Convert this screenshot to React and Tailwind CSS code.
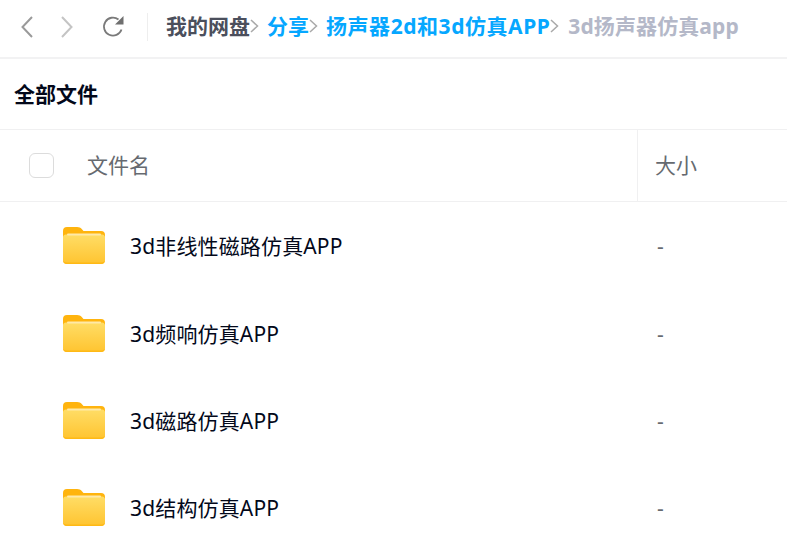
const font = { fontFamily: '"Noto Sans", "Noto Sans CJK SC", sans-serif' };

function Chevron({ dir = "right", className }) {
  return (
    <svg viewBox="0 0 12 24" className={className} fill="none" stroke="currentColor" strokeWidth="2">
      <path d={dir === "left" ? "M11 2 1.5 12 11 22" : "M1 2l9.5 10L1 22"} />
    </svg>
  );
}

function Sep() {
  return (
    <svg viewBox="0 0 9 14" className="w-[9px] h-[14px] text-[#a9a9a9] shrink-0" fill="none" stroke="currentColor" strokeWidth="1.5">
      <path d="M1 1l6.5 6L1 13" />
    </svg>
  );
}

function Folder({ id }) {
  return (
    <svg viewBox="0 0 42 37" className="w-[42px] h-[37px] shrink-0">
      <defs>
        <linearGradient id={id} x1="0" y1="0" x2="0" y2="1">
          <stop offset="0" stopColor="#ffdd66" />
          <stop offset="1" stopColor="#ffc430" />
        </linearGradient>
      </defs>
      <path d="M0 4a4 4 0 0 1 4-4h10c2.500 0 3.500.8 4.500 1.800L20.500 4H38a4 4 0 0 1 4 4v12H0z" fill="#ffb40e" />
      <path d="M0 11a3 3 0 0 1 3-3.500h36A3 3 0 0 1 42 11v22a4 4 0 0 1-4 4H4a4 4 0 0 1-4-4z" fill={`url(#${id})`} />
      <path d="M0 32.500c0 2 1.500 3 4 3h34c2.500 0 4-1 4-3V33a4 4 0 0 1-4 4H4a4 4 0 0 1-4-4z" fill="#ffb915" />
      <rect x="4" y="6.500" width="34" height="2" rx="1" fill="#ffe9a8" />
    </svg>
  );
}

const rows = [
  { name: "3d非线性磁路仿真APP", id: "f1", cls: "h-[87px] flex items-center" },
  { name: "3d频响仿真APP", id: "f2", cls: "h-[87px] mt-px flex items-center" },
  { name: "3d磁路仿真APP", id: "f3", cls: "h-[87px] flex items-center" },
  { name: "3d结构仿真APP", id: "f4", cls: "h-[87px] flex items-center" },
];

export default function App() {
  return (
    <div style={font} className="w-[787px] h-[560px] overflow-hidden bg-white">
      <div className="h-[59px] flex items-center border-b-2 border-[#f2f2f3] pb-[4px]">
        <div className="w-[147px] h-[28px] flex items-center pl-[21px]">
          <Chevron dir="left" className="w-[12px] h-[24px] text-[#9a9a9a]" />
          <Chevron className="w-[12px] h-[24px] text-[#c4c4c4] ml-[28px]" />
          <svg viewBox="0 0 24 24" className="w-[24px] h-[24px] ml-[29px]" fill="none">
            <path d="M19.500 14.500A9 9 0 1 1 16.500 4.500" stroke="#7a7a7a" strokeWidth="1.800" />
            <path d="M21.500 1v8.500H13z" fill="#6f6f6f" />
          </svg>
        </div>
        <div className="w-px h-[28px] bg-[#eeeeee]" />
        <div className="flex items-center text-[21px] leading-[26px] mb-[2px] font-bold ml-[18px] whitespace-nowrap">
          <span className="text-[#4b4f5c]">我的网盘</span>
          <Sep />
          <span className="text-[#06a7ff] ml-[8px]">分享</span>
          <Sep />
          <span className="text-[#06a7ff] ml-[8px] tracking-[0.55px]">扬声器2d和3d仿真APP</span>
          <Sep />
          <span className="text-[#b4b8c8] ml-[9px] tracking-[0.1px]">3d扬声器仿真app</span>
        </div>
      </div>
      <div className="h-[71px] flex items-center pl-[14px] text-[21px] leading-[28px] font-bold text-[#03081a] border-b border-[#f0f0f1]">
        全部文件
      </div>
      <div className="h-[72px] flex items-center border-b border-[#f0f0f1]">
        <div className="w-[638px] h-full flex items-center pl-[29px] border-r border-[#f0f0f1]">
          <div className="w-[25px] h-[25px] rounded-[6px] border border-[#dcdcdc]" />
          <span className="ml-[33px] mb-[2px] text-[21px] leading-[28px] text-[#666a70]">文件名</span>
        </div>
        <span className="ml-[17px] mb-[2px] text-[21px] leading-[28px] text-[#666a70]">大小</span>
      </div>
      {rows.map((r) => (
        <div key={r.id} className={r.cls}>
          <div className="w-[638px] flex items-center pl-[63px]">
            <Folder id={r.id} />
            <span className="ml-[25px] text-[21px] leading-[28px] tracking-[0.15px] text-[#03081a] whitespace-nowrap">{r.name}</span>
          </div>
          <span className="ml-[19px] text-[21px] leading-[28px] text-[#666a70]">-</span>
        </div>
      ))}
    </div>
  );
}
